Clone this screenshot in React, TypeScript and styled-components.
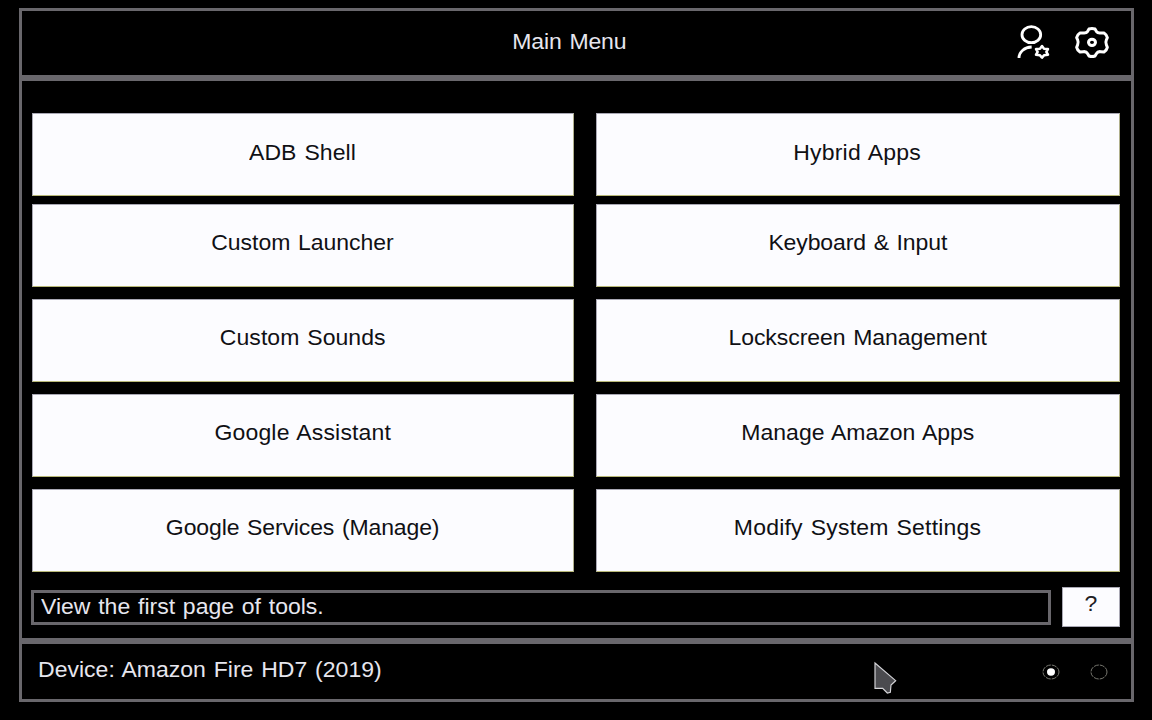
import React from "react";
import styled, { createGlobalStyle } from "styled-components";

const line = "#69676c";

const GlobalStyle = createGlobalStyle`
  * { box-sizing: border-box; }
  body { margin: 0; background: #000; overflow: hidden; }
`;

const Screen = styled.div`
  position: relative;
  width: 1152px;
  height: 720px;
  padding: 8px 18px 18px 19px;
  display: flex;
  flex-direction: column;
  background: #000;
  color: #e6e6ee;
  font: 21.3px/24px "Liberation Sans", Arial, sans-serif;
  word-spacing: 1.3px;
`;

const Panel = styled.section`
  border: 3px solid ${line};
`;

const Header = styled(Panel)`
  height: 70px;
  display: grid;
  grid-template-columns: 1fr auto 1fr;
  align-items: center;
  padding: 0 22px 2px 22px;
`;

const Title = styled.h1`
  grid-column: 2;
  margin: 0;
  font: inherit;
  letter-spacing: -0.1px;
  transform: translateX(-7.5px) scaleX(1.08);
`;

const HeaderIcons = styled.div`
  display: flex;
  justify-content: flex-end;
  align-items: center;
  gap: 24px;
  padding-top: 1px;
`;

const Main = styled(Panel)`
  height: 563px;
  padding: 32px 11px 0 10px;
`;

const Grid = styled.div`
  display: grid;
  grid-template-columns: 542px 524px;
  grid-template-rows: 91px repeat(4, 95px);
  column-gap: 22px;
`;

const Tool = styled.button`
  height: 83px;
  padding: 0 1px 5px 0;
  border: 1px solid #a9a8b4;
  border-right-color: #b0b08c;
  border-bottom-color: #b8b877;
  background: #fcfcff;
  color: #101014;
  font: inherit;
  word-spacing: inherit;

  &:nth-child(-n + 2) {
    padding-bottom: 3px;
  }
`;

const Label = styled.span<{ $origin?: string; $tracking?: number }>`
  display: inline-block;
  white-space: nowrap;
  letter-spacing: ${(p) => p.$tracking ?? 0}px;
  transform: scaleX(1.08);
  transform-origin: ${(p) => p.$origin ?? "center"};
`;

const InfoRow = styled.div`
  display: flex;
  align-items: center;
  justify-content: space-between;
  height: 40px;
  margin: 3px 0 0 -1px;
`;

const Info = styled.div`
  width: 1020px;
  height: 35px;
  padding: 2px 0 0 7px;
  border: 3px solid ${line};
`;

const Help = styled.button`
  width: 58px;
  height: 40px;
  padding: 0 0 6px;
  border: 1px solid #a9a8b4;
  background: #fcfcff;
  color: #202024;
  font: inherit;
`;

const Footer = styled(Panel)`
  height: 61px;
  display: flex;
  justify-content: space-between;
  align-items: center;
  padding: 0 23px 3px 16px;
`;

const Pages = styled.div`
  display: flex;
  gap: 30px;
  padding-top: 4px;
`;

const Svg = styled.svg`
  display: block;
  overflow: visible;
`;

const Cursor = styled.svg`
  position: absolute;
  left: 872.5px;
  top: 661px;
`;

const UserSettingsIcon = () => (
  <Svg width="34" height="35" viewBox="75 76 102 105" fill="none" stroke="#fff" strokeWidth="8.5">
    <ellipse cx="118" cy="105" rx="28" ry="24" />
    <path d="M81 175C81 156 98 143 119 142" />
    <path
      d="M150 139L156 147L168 148L163 156.500L168 165L156 167L150 174L144 167L132 165L137 156.500L132 148L144 147Z"
      strokeWidth="7.5"
      strokeLinejoin="round"
    />
  </Svg>
);

const SettingsIcon = () => (
  <Svg width="34" height="35" viewBox="248 76 102 105" fill="none" stroke="#fff" strokeWidth="9" strokeLinejoin="round">
    <path d="M290 88Q299 85 308 88L312 95Q316 101 325 100L335 100Q343 105 345 114L342 121Q339 128 342 135L345 143Q343 152 335 157L325 156Q316 155 312 162L308 169Q299 172 290 169L286 162Q282 155 273 156L263 157Q255 152 253 143L256 135Q259 128 256 121L253 114Q255 105 263 100L273 100Q282 101 286 95Z" />
    <ellipse cx="299" cy="128" rx="10.500" ry="9.500" />
  </Svg>
);

const PageDot = ({ active }: { active?: boolean }) => (
  <Svg width="18" height="16" viewBox="0 0 18 16">
    <ellipse cx="9" cy="8" rx="8" ry="7" fill="none" stroke="#77776f" strokeDasharray="5 1" />
    {active && <ellipse cx="9" cy="8" rx="4" ry="3.7" fill="#fff" />}
  </Svg>
);

const tools = [
  { name: "ADB Shell", tracking: 0.06 },
  { name: "Hybrid Apps", tracking: 0.18 },
  { name: "Custom Launcher", tracking: -0.03 },
  { name: "Keyboard & Input", tracking: -0.1 },
  { name: "Custom Sounds", tracking: 0.05 },
  { name: "Lockscreen Management", tracking: -0.06 },
  { name: "Google Assistant", tracking: 0.15 },
  { name: "Manage Amazon Apps", tracking: 0 },
  { name: "Google Services (Manage)", tracking: -0.11 },
  { name: "Modify System Settings", tracking: 0.18 },
];

export default function App() {
  return (
    <>
      <GlobalStyle />
      <Screen>
        <Header>
          <Title>Main Menu</Title>
          <HeaderIcons>
            <UserSettingsIcon />
            <SettingsIcon />
          </HeaderIcons>
        </Header>
        <Main>
          <Grid>
            {tools.map((tool) => (
              <Tool key={tool.name}>
                <Label $tracking={tool.tracking}>{tool.name}</Label>
              </Tool>
            ))}
          </Grid>
          <InfoRow>
            <Info>
              <Label $origin="left">View the first page of tools.</Label>
            </Info>
            <Help>
              <Label>?</Label>
            </Help>
          </InfoRow>
        </Main>
        <Footer>
          <Label $origin="left" $tracking={0.02}>Device: Amazon Fire HD7 (2019)</Label>
          <Pages>
            <PageDot active />
            <PageDot />
          </Pages>
        </Footer>
        <Cursor width="24" height="33" viewBox="99 273 72 99">
          <path
            d="M105 279L167 332L153 345L151 367L142 369L128 355L105 355Z"
            fill="#4b4b4f"
            stroke="#d4d4d8"
            strokeWidth="3.5"
          />
        </Cursor>
      </Screen>
    </>
  );
}
